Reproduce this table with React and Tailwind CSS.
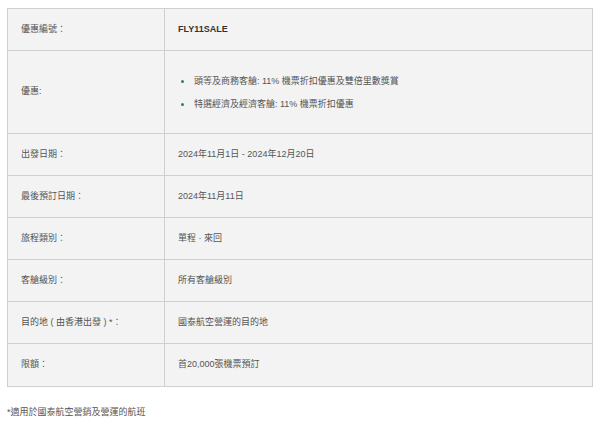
import React from 'react';

const rows = [
  { label: '優惠編號：', value: <span className="font-bold text-[#333]">FLY11SALE</span> },
  {
    label: '優惠:',
    tall: true,
    value: (
      <ul className="flex flex-col gap-[9px] mt-[2px]">
        <li className="flex items-center">
          <span className="w-[3px] h-[3px] rounded-full bg-[#2a7d7a] ml-[3px] mr-[10px]" />
          頭等及商務客艙: 11% 機票折扣優惠及雙倍里數獎賞
        </li>
        <li className="flex items-center">
          <span className="w-[3px] h-[3px] rounded-full bg-[#2a7d7a] ml-[3px] mr-[10px]" />
          特選經濟及經濟客艙: 11% 機票折扣優惠
        </li>
      </ul>
    ),
  },
  { label: '出發日期：', value: '2024年11月1日 - 2024年12月20日' },
  { label: '最後預訂日期：', value: '2024年11月11日' },
  { label: '旅程類別：', value: '單程 · 來回' },
  { label: '客艙級別：', value: '所有客艙級別' },
  { label: '目的地 ( 由香港出發 ) *：', value: '國泰航空營運的目的地' },
  { label: '限額：', value: '首20,000張機票預訂' },
];

export default function App() {
  return (
    <div
      className="bg-white w-[600px] h-[428px] pt-[8px] px-[7px] text-[9px] text-[#555]"
      style={{ fontFamily: '"Liberation Sans", "Noto Sans CJK TC", sans-serif' }}
    >
      <div className="border border-[#cfcfcf] bg-[#f3f3f3]">
        {rows.map((r, i) => (
          <div
            key={i}
            className={`grid grid-cols-[157px_1fr] ${i < rows.length - 1 ? 'border-b border-[#cfcfcf]' : ''} ${r.tall ? 'h-[83px]' : 'h-[42px]'}`}
          >
            <div className="flex items-center pl-[13px] border-r border-[#cfcfcf]">{r.label}</div>
            <div className="flex items-center pl-[13px]">{r.value}</div>
          </div>
        ))}
      </div>
      <p className="mt-[19px]">*適用於國泰航空營銷及營運的航班</p>
    </div>
  );
}
